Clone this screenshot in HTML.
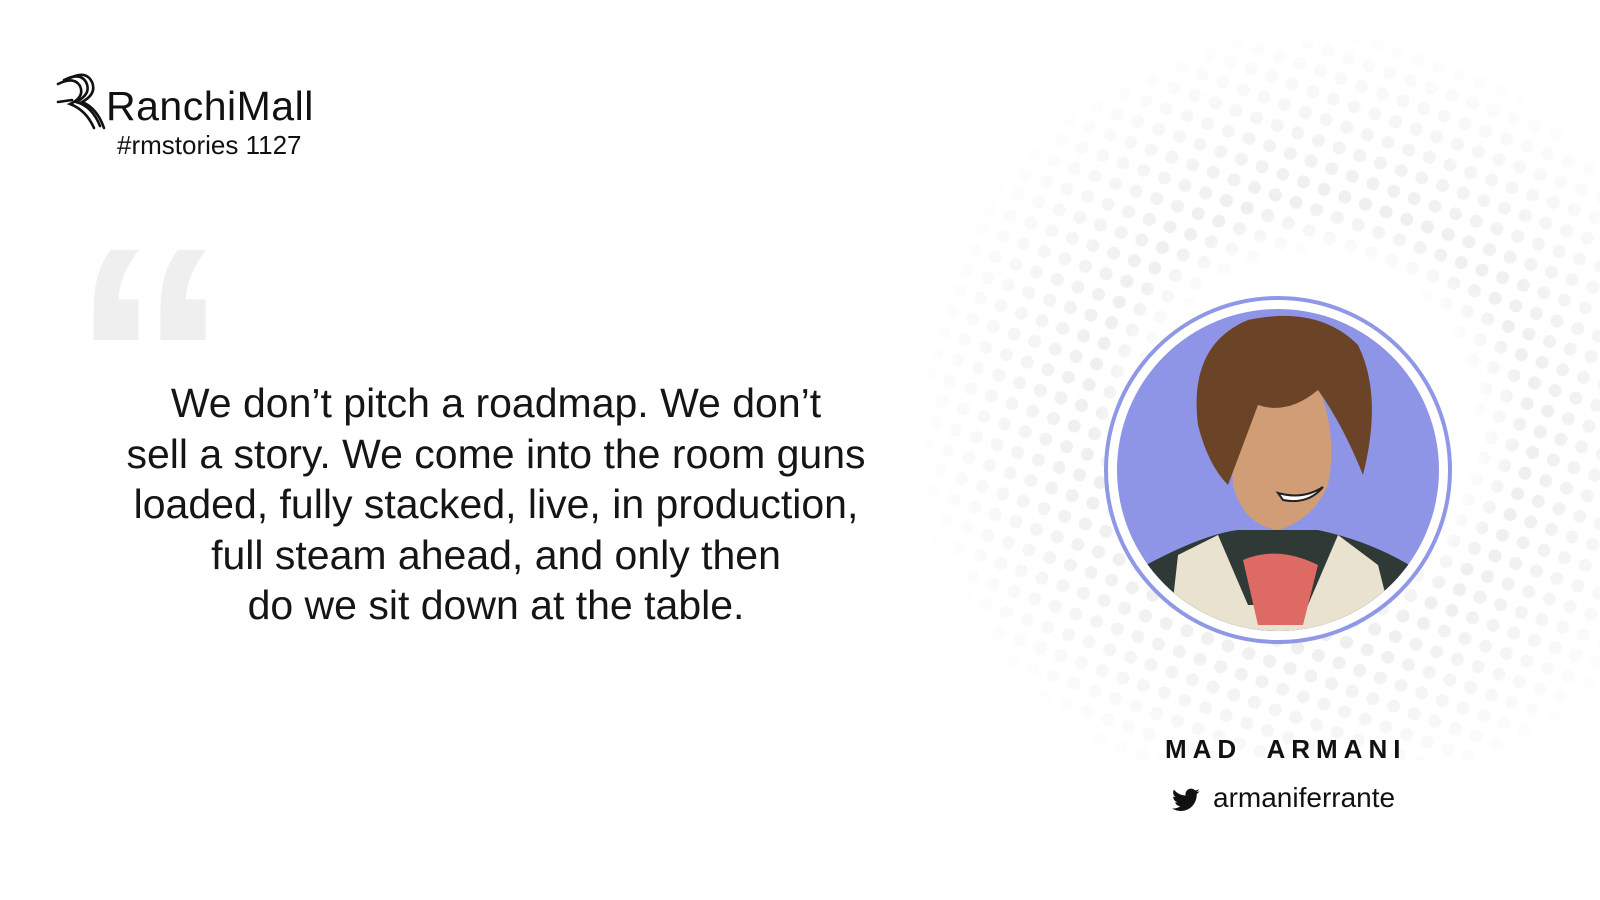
<!DOCTYPE html>
<html><head><meta charset="utf-8"><style>
html,body{margin:0;padding:0;background:#fff;}
body{width:1600px;height:900px;position:relative;overflow:hidden;font-family:"Liberation Sans",sans-serif;color:#141414;}
.abs{position:absolute;}
</style></head><body>
<svg class="abs" style="left:0;top:0" width="1600" height="900">
<defs>
<pattern id="dots" width="22" height="22" patternUnits="userSpaceOnUse" patternTransform="rotate(20)">
<circle cx="11" cy="11" r="6.5" fill="#ececec"/>
</pattern>
<radialGradient id="rg" cx="1310" cy="420" r="400" gradientUnits="userSpaceOnUse">
<stop offset="0.4" stop-color="#fff" stop-opacity="0"/>
<stop offset="0.55" stop-color="#fff" stop-opacity="0.85"/>
<stop offset="0.8" stop-color="#fff" stop-opacity="0.45"/>
<stop offset="1" stop-color="#fff" stop-opacity="0"/>
</radialGradient>
<mask id="m"><rect width="1600" height="900" fill="url(#rg)"/></mask>
<clipPath id="cc"><circle cx="1278" cy="470" r="161"/></clipPath>
</defs>
<rect x="880" y="40" width="720" height="720" fill="url(#dots)" mask="url(#m)"/>
<circle cx="1278" cy="470" r="174" fill="#fff"/>
<circle cx="1278" cy="470" r="172" fill="none" stroke="#8f98e6" stroke-width="4"/>
<g clip-path="url(#cc)">
<rect x="1100" y="295" width="360" height="360" fill="#8e95e6"/>
<g transform="translate(18,5)">
<path d="M1110 570 Q1180 530 1220 525 L1300 525 Q1370 540 1420 580 L1430 640 L1100 640Z" fill="#2f3a36"/>
<path d="M1160 550 L1200 530 L1230 600 L1290 600 L1320 530 L1360 560 L1380 640 L1150 640Z" fill="#e9e2cf"/>
<path d="M1225 555 Q1260 540 1300 560 L1285 620 L1240 620Z" fill="#dd6b63"/>
<path d="M1210 390 Q1240 360 1300 380 Q1320 430 1310 480 Q1295 515 1260 525 Q1225 520 1215 480Z" fill="#d19d77"/>
<path d="M1180 420 Q1170 340 1230 315 Q1300 300 1340 340 Q1365 390 1345 470 Q1325 420 1300 385 Q1270 410 1240 400 Q1225 440 1210 480 Q1190 460 1180 420Z" fill="#6b4326"/>
<path d="M1260 488 Q1285 495 1305 482 Q1290 500 1265 495Z" fill="#fff" stroke="#222" stroke-width="2"/>
</g>
</g>
<text x="70" y="470" font-family="Liberation Sans,sans-serif" font-size="320" font-weight="bold" fill="#efefef">“</text>
<path transform="translate(1172,786) scale(1.15)" fill="#111" d="M24 4.6c-.9.4-1.8.6-2.8.8 1-.6 1.8-1.6 2.2-2.7-1 .6-2 1-3.1 1.2C19.3 2.9 18 2.3 16.6 2.3c-2.7 0-4.9 2.2-4.9 4.9 0 .4 0 .8.1 1.1C7.7 8.1 4.1 6.1 1.7 3.1c-.4.7-.7 1.6-.7 2.5 0 1.7.9 3.2 2.2 4.1-.8 0-1.6-.2-2.2-.6v.1c0 2.4 1.7 4.4 3.9 4.8-.4.1-.8.2-1.3.2-.3 0-.6 0-.9-.1.6 2 2.4 3.4 4.6 3.4-1.7 1.3-3.8 2.1-6.1 2.1-.4 0-.8 0-1.2-.1 2.2 1.4 4.8 2.2 7.5 2.2 9.1 0 14-7.5 14-14v-.6c1-.7 1.8-1.6 2.5-2.5z"/>
<g fill="none" stroke="#111" stroke-width="2.6" stroke-linecap="round">
<path d="M64 80 Q80 72 86 82 Q92 94 76 102 Q92 106 100 126"/>
<path d="M70 78 Q86 70 92 82 Q97 94 82 102 Q97 108 104 128"/>
<path d="M58 84 Q74 76 80 86 Q85 97 70 104 Q86 110 94 128"/>
<path d="M58 102 L72 100"/>
</g>
</svg>
<div class="abs" style="left:106px;top:83px;font-size:41px;letter-spacing:0.5px;color:#111;">RanchiMall</div>
<div class="abs" style="left:117px;top:130px;font-size:26px;color:#111;">#rmstories 1127</div>
<div class="abs" style="left:76px;top:378px;width:840px;text-align:center;font-size:41px;line-height:50.5px;color:#151515;">We don’t pitch a roadmap. We don’t<br>sell a story. We come into the room guns<br>loaded, fully stacked, live, in production,<br>full steam ahead, and only then<br>do we sit down at the table.</div>
<div class="abs" style="left:1165px;top:734px;font-size:26px;font-weight:bold;letter-spacing:6px;word-spacing:12px;color:#111;">MAD ARMANI</div>
<div class="abs" style="left:1213px;top:782px;font-size:28px;color:#111;">armaniferrante</div>
</body></html>
